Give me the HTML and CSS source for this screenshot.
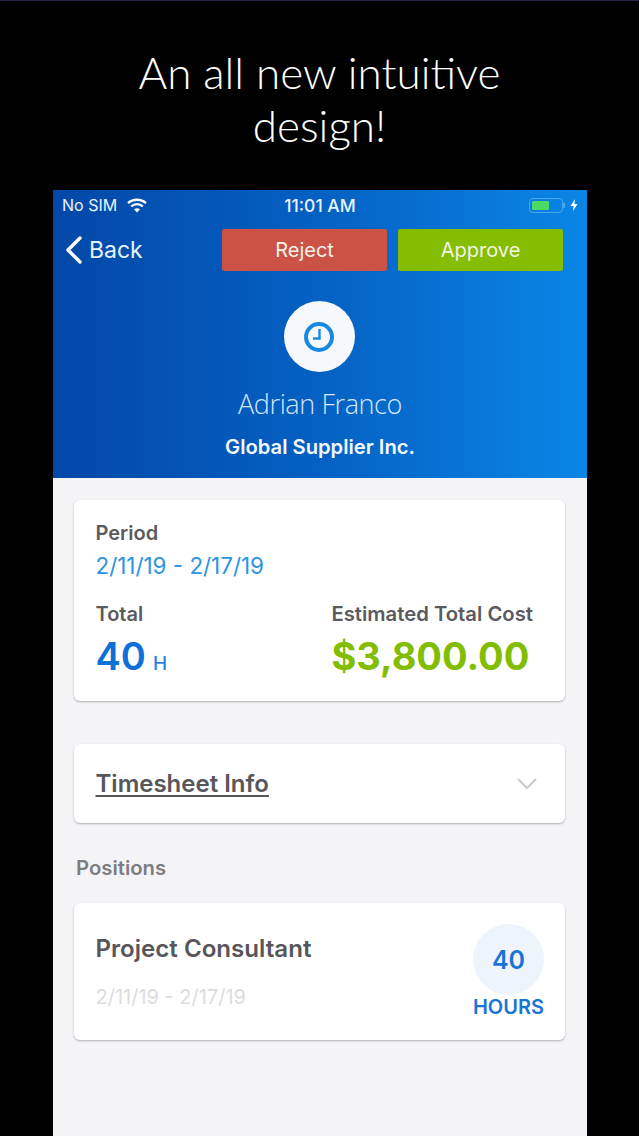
FILE: index.html
```html
<!DOCTYPE html>
<html lang="en">
<head>
<meta charset="utf-8">
<title>Timesheet</title>
<link rel="stylesheet" href="styles.css">
</head>
<body>
<div class="stage">
  <h1 class="headline">An all new intuitive<br>design!</h1>
  <main class="phone">
    <header class="hero">
      <div class="status">
        <div class="status-left">
          <span>No SIM</span>
          <svg class="wifi" width="20" height="15" viewBox="0 0 20 15"><path d="M1 5.2C6 .6 14 .6 19 5.2" fill="none" stroke="#fff" stroke-width="2.3"/><path d="M4.2 8.4c3.4-3 8.2-3 11.6 0" fill="none" stroke="#fff" stroke-width="2.3"/><path d="M7 11.2c1.8-1.3 4.2-1.3 6 0l-3 3.3z" fill="#fff"/></svg>
        </div>
        <div class="status-time">11:01 AM</div>
        <div class="status-right">
          <div class="battery"><div class="battery-fill"></div></div>
          <div class="battery-tip"></div>
          <svg width="8" height="12" viewBox="0 0 8 12"><path d="M5 0 .5 7H3.6L3 12l4.5-7H4.4z" fill="#fff"/></svg>
        </div>
      </div>
      <nav class="nav">
        <div class="back">
          <svg width="20" height="30" viewBox="0 0 20 30"><path d="M16 3 4 15l12 12" fill="none" stroke="#fff" stroke-width="3.4" stroke-linecap="round" stroke-linejoin="round"/></svg>
          <span>Back</span>
        </div>
        <div class="actions">
          <button class="btn btn-reject">Reject</button>
          <button class="btn btn-approve">Approve</button>
        </div>
      </nav>
      <div class="avatar">
        <svg width="32" height="32" viewBox="0 0 32 32"><circle cx="16" cy="16" r="13" fill="none" stroke="#1689e2" stroke-width="4"/><path d="M16.5 8V17.5H10" fill="none" stroke="#1689e2" stroke-width="2.4"/></svg>
      </div>
      <div class="person">Adrian Franco</div>
      <div class="company">Global Supplier Inc.</div>
    </header>
    <section class="content">
      <article class="card summary">
        <div class="label">Period</div>
        <div class="period">2/11/19 - 2/17/19</div>
        <div class="totals">
          <div>
            <div class="label">Total</div>
            <div class="hours-total">40<span class="unit">H</span></div>
          </div>
          <div class="cost-col">
            <div class="label cost-label">Estimated Total Cost</div>
            <div class="cost">$3,800.00</div>
          </div>
        </div>
      </article>
      <article class="card info">
        <span class="info-title">Timesheet Info</span>
        <svg width="22" height="14" viewBox="0 0 22 14"><path d="M2 2l9 9 9-9" fill="none" stroke="#c9c9ce" stroke-width="2"/></svg>
      </article>
      <h2 class="section-title">Positions</h2>
      <article class="card position">
        <div>
          <div class="position-name">Project Consultant</div>
          <div class="position-dates">2/11/19 - 2/17/19</div>
        </div>
        <div class="badge-col">
          <div class="badge">40</div>
          <div class="badge-label">HOURS</div>
        </div>
      </article>
    </section>
  </main>
</div>
</body>
</html>
```
FILE: styles.css
```css
* { box-sizing: border-box; }
html, body { margin: 0; padding: 0; background: #000; }
body { width: 639px; height: 1136px; overflow: hidden; font-family: Inter, "Liberation Sans", sans-serif; }
.stage { height: 1136px; display: flex; flex-direction: column; border-top: 1px solid #2a2350; }
.headline { margin: 0; padding-top: 45px; height: 189px; text-align: center; color: #fff; font-family: Lato, "Open Sans", sans-serif; font-weight: 300; font-size: 44px; line-height: 53px; }
.phone { margin-left: 53px; width: 534px; flex: 1; display: flex; flex-direction: column; background: #f4f4f7; }
.hero { height: 288px; background: linear-gradient(90deg, #0348a8 0%, #0461c3 50%, #0a86e6 100%); color: #fff; display: flex; flex-direction: column; align-items: center; }
.status { width: 100%; height: 30px; padding: 0 9px 0 9px; display: grid; grid-template-columns: 1fr auto 1fr; align-items: center; font-size: 16px; color: #eaf3ff; }
.status-left { display: flex; align-items: center; gap: 10px; }
.status-time { font-weight: 500; font-size: 17.5px; }
.status-right { display: flex; align-items: center; justify-content: flex-end; }
.battery { width: 34px; height: 15px; padding: 2px; border: 1px solid #4aa6ec; border-radius: 4px; }
.battery-fill { width: 17px; height: 100%; background: #4cd964; border-radius: 1.5px; }
.battery-tip { width: 2px; height: 5px; margin-right: 5px; background: #4aa6ec; }
.nav { width: 100%; height: 51px; margin-top: 4px; padding: 0 24px 0 11px; display: flex; align-items: center; justify-content: space-between; }
.back { display: flex; align-items: center; gap: 5px; font-size: 23px; color: #e8f2ff; }
.actions { display: flex; gap: 11px; }
.btn { width: 165px; height: 42px; border: 0; border-radius: 2px; padding: 0; color: #f3f3e8; font-family: Inter, sans-serif; font-size: 20px; }
.btn-reject { background: #cc5246; }
.btn-approve { background: #85bd02; }
.avatar { margin: 26px 2px 0 0; width: 71px; height: 71px; border-radius: 50%; background: #f6f8fb; display: flex; align-items: center; justify-content: center; }
.person { margin-top: 15px; font-family: "Open Sans", sans-serif; font-weight: 300; font-size: 27px; line-height: 34px; color: #d5e6fb; letter-spacing: -0.4px; }
.company { margin-top: 14px; font-weight: 600; font-size: 20.2px; line-height: 24px; color: #f4f8ff; }
.content { padding: 22px 22px 0 21px; }
.card { background: #fff; border-radius: 6px; box-shadow: 0 1px 2px rgba(60,60,70,.38); }
.summary { height: 201px; padding: 21px 22px 21px 21.5px; }
.label { font-weight: 600; font-size: 20px; line-height: 25px; color: #5b5a5e; }
.cost-label { font-size: 20.3px; line-height: 24px; }
.period { margin-top: 6px; font-size: 22.4px; line-height: 27px; color: #2a93e3; }
.totals { margin-top: 23px; display: flex; justify-content: space-between; }
.hours-total { margin-top: 6px; font-weight: 600; font-size: 38px; line-height: 46px; color: #0f70d8; }
.unit { margin-left: 7px; font-weight: 500; font-size: 19px; color: #2a84de; }
.cost-col { padding-right: 10px; }
.cost { margin-top: 7px; font-weight: 700; font-size: 38px; line-height: 46px; color: #82bd02; }
.info { margin-top: 43px; height: 79px; padding: 0 27px 0 21.5px; display: flex; align-items: center; justify-content: space-between; }
.info-title { font-weight: 600; font-size: 24px; color: #57565a; text-decoration: underline; text-decoration-thickness: 1.5px; text-underline-offset: 3px; }
.section-title { margin: 33px 0 0 2px; height: 47px; font-weight: 600; font-size: 20.3px; line-height: 24px; color: #7d7c80; }
.position { height: 137px; padding: 0 21px 0 21.5px; display: flex; justify-content: space-between; }
.position-name { margin-top: 31px; font-weight: 600; font-size: 24.1px; line-height: 30px; color: #57565a; }
.position-dates { margin-top: 20px; font-size: 20px; line-height: 26px; color: #dcdce0; }
.badge-col { margin-top: 21px; display: flex; flex-direction: column; align-items: center; }
.badge { width: 71px; height: 71px; border-radius: 50%; background: #eef4fc; color: #1a74d6; display: flex; align-items: center; justify-content: center; font-weight: 600; font-size: 25px; }
.badge-label { margin-top: -1px; font-weight: 600; font-size: 20px; line-height: 26px; color: #1a74d6; }
```
